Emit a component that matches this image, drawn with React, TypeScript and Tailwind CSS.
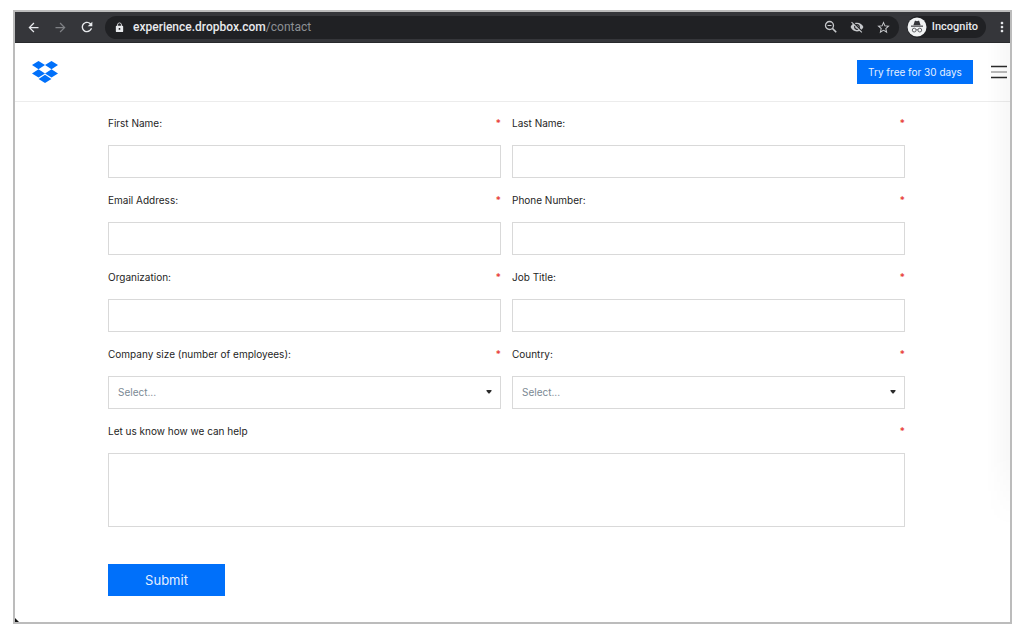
import React from 'react';
import {
    MdArrowBack,
    MdArrowForward,
    MdLock,
    MdMoreVert,
    MdRefresh,
    MdStarBorder,
    MdVisibilityOff,
} from 'react-icons/md';

interface FieldProps {
    id: string;
    label: string;
    type?: 'text' | 'email' | 'tel' | 'select' | 'textarea';
}

const FIELDS: FieldProps[] = [
    { id: 'first-name', label: 'First Name:' },
    { id: 'last-name', label: 'Last Name:' },
    { id: 'email', label: 'Email Address:', type: 'email' },
    { id: 'phone', label: 'Phone Number:', type: 'tel' },
    { id: 'organization', label: 'Organization:' },
    { id: 'job-title', label: 'Job Title:' },
    { id: 'company-size', label: 'Company size (number of employees):', type: 'select' },
    { id: 'country', label: 'Country:', type: 'select' },
];

const DropboxLogo: React.FC = () => (
    <svg viewBox="0 0 26 22" className="w-[26px] h-[22px]" fill="#0070fa">
        <path d="M6.5 0L13 4.1 6.5 8.3 0 4.1z" />
        <path d="M19.5 0L26 4.1 19.5 8.3 13 4.1z" />
        <path d="M6.5 8.3L13 12.4 6.5 16.6 0 12.4z" />
        <path d="M19.5 8.3L26 12.4 19.5 16.6 13 12.4z" />
        <path d="M13 13.8l6.4 4.1L13 22l-6.4-4.1z" />
    </svg>
);

const ZoomOutIcon: React.FC = () => (
    <svg viewBox="0 0 14 14" className="w-[14px] h-[14px]" fill="none" stroke="currentColor">
        <circle cx="5.5" cy="5.5" r="4" strokeWidth="1.3" />
        <path d="M3.5 5.5h4" strokeWidth="1" />
        <path d="M8.4 8.4l3.8 3.8" strokeWidth="1.6" />
    </svg>
);

const IncognitoIcon: React.FC = () => (
    <svg viewBox="0 0 20 20" className="w-5 h-5">
        <circle cx="10" cy="10" r="9.5" fill="#f1f3f4" />
        <path d="M7.7 4.2c.2-.5.6-.6 1-.4l1.3.4 1.3-.4c.4-.2.8-.1 1 .4l1.3 4H6.4z" fill="#35363a" />
        <rect x="4" y="8.6" width="12" height="1.1" fill="#35363a" />
        <g fill="none" stroke="#55565a" strokeWidth="0.9">
            <circle cx="7.2" cy="13.1" r="1.9" />
            <circle cx="12.8" cy="13.1" r="1.9" />
            <path d="M9.1 12.9q.9-.6 1.8 0" />
        </g>
    </svg>
);

const Field: React.FC<FieldProps> = ({ id, label, type = 'text' }) => (
    <div>
        <div className="flex justify-between h-4 mb-[14px]">
            <label htmlFor={id} className="text-[10px] leading-4 text-[#1e1e1e]">{label}</label>
            <span className="text-[10px] leading-4 font-bold text-[#e8453e]">*</span>
        </div>
        {type === 'textarea' && (
            <textarea id={id} required className="block w-full h-[74px] p-2 text-[10px] border border-[#d9d9d9] resize-none bg-white" />
        )}
        {type === 'select' && (
            <div className="relative">
                <select id={id} required className="block w-full h-[33px] pl-[9px] pr-6 text-[10px] text-[#7b8994] border border-[#d9d9d9] appearance-none bg-white">
                    <option value="">Select...</option>
                </select>
                <svg viewBox="0 0 6 4" className="absolute right-[9px] top-[14px] w-[6px] h-1 pointer-events-none" fill="#2b2b2b">
                    <path d="M0.5 0h5v1L3.5 3.5h-1L0.5 1z" />
                </svg>
            </div>
        )}
        {type !== 'textarea' && type !== 'select' && (
            <input id={id} type={type} required className="block w-full h-[33px] px-[9px] text-[10px] border border-[#d9d9d9] bg-white" />
        )}
    </div>
);

const BrowserBar: React.FC = () => (
    <div className="flex items-center h-[31px] pl-[11px] bg-[#35363a] border-b border-[#28292c] text-[#e8eaed] font-['Roboto','Liberation_Sans',sans-serif]">
        <button aria-label="Back"><MdArrowBack size={15} /></button>
        <button aria-label="Forward" className="ml-3 text-[#7f8185]"><MdArrowForward size={15} /></button>
        <button aria-label="Reload" className="ml-[11px]"><MdRefresh size={16} /></button>
        <div className="flex items-center flex-1 h-[23px] ml-[10px] pl-[9px] pr-2 rounded-full bg-[#202124]">
            <MdLock size={11} />
            <div className="flex-1 ml-2 text-[12px] leading-4 font-medium">
                experience.dropbox.com<span className="font-normal text-[#8d9094]">/contact</span>
            </div>
            <div className="flex items-center gap-3 text-[#c6c8cb]">
                <button aria-label="Zoom"><ZoomOutIcon /></button>
                <button aria-label="Third-party cookies blocked"><MdVisibilityOff size={14} /></button>
                <button aria-label="Bookmark"><MdStarBorder size={15} /></button>
            </div>
        </div>
        <button className="flex items-center gap-[5px] h-[22px] ml-2 pr-2 rounded-full bg-[#202124] text-[11px] leading-4 font-medium">
            <IncognitoIcon />
            Incognito
        </button>
        <button aria-label="Menu" className="ml-2"><MdMoreVert size={16} /></button>
    </div>
);

export default function App() {
    return (
        <div className="min-h-screen bg-white pt-[10px] pr-[12px] pb-[13px] pl-[13px] flex flex-col font-['Inter','Liberation_Sans',sans-serif]">
            <div className="relative flex-1 flex flex-col border-2 border-[#bcbcbc] bg-white overflow-hidden">
                <BrowserBar />
                <header className="flex items-center h-[59px] pl-[17px] pr-[3px] border-b border-[#ececec]">
                    <a href="#home" aria-label="Dropbox"><DropboxLogo /></a>
                    <button className="ml-auto h-6 w-[116px] bg-[#0070fa] text-[10px] leading-4 text-[#e4efff]">
                        Try free for 30 days
                    </button>
                    <button aria-label="Open navigation" className="ml-[18px]">
                        <svg viewBox="0 0 16 14" className="w-4 h-[14px]" stroke="#2b2b2b" strokeWidth="1.5">
                            <path d="M0 1.5h16M0 12.5h16" />
                            <path d="M0 7h16" strokeWidth="1" stroke="#777" />
                        </svg>
                    </button>
                </header>

                <form className="pl-[93px] pr-[105px] pt-[13px]" onSubmit={(e) => e.preventDefault()}>
                    <div className="grid grid-cols-2 gap-x-[11px] gap-y-[14px]">
                        {FIELDS.map((field) => (
                            <Field key={field.id} {...field} />
                        ))}
                        <div className="col-span-2">
                            <Field id="message" label="Let us know how we can help" type="textarea" />
                        </div>
                    </div>
                    <button type="submit" className="block h-8 w-[117px] mt-[37px] bg-[#0070fa] text-[13px] leading-4 text-[#e4efff]">
                        Submit
                    </button>
                </form>

                <div className="absolute right-0 top-[31px] bottom-[95px] w-6 bg-linear-to-l from-black/3 to-transparent mask-b-from-85% pointer-events-none"></div>
                {/* Corner mark */}
                <svg viewBox="0 0 4 4" className="absolute left-0 bottom-0 w-1 h-1" fill="#111">
                    <path d="M0 0l4 4H0z" />
                </svg>
            </div>
        </div>
    );
}
